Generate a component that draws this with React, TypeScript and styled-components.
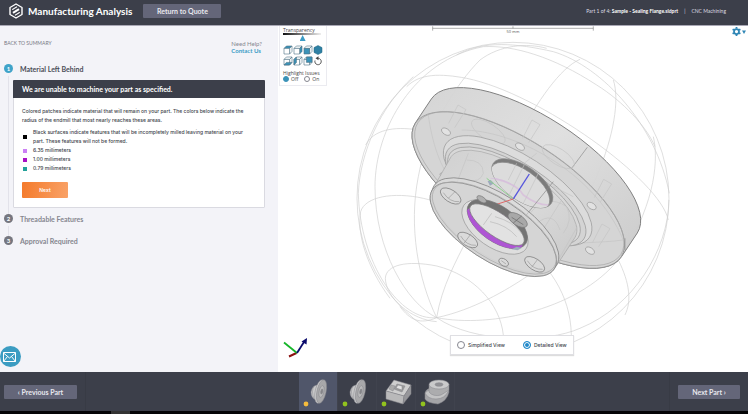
import React, { useState } from "react";
import styled, { createGlobalStyle } from "styled-components";

const GlobalStyle = createGlobalStyle`
  *, *::before, *::after { box-sizing: border-box; }
  body { margin: 0; background: #fff; font-family: Lato, "Open Sans", sans-serif; color: #3c3f4a; }
  button, input { font-family: inherit; margin: 0; }
  h1, h2, h3, p, ul, ol { margin: 0; padding: 0; }
  ul, ol { list-style: none; }
  a { text-decoration: none; }
`;

const Page = styled.div`
  display: flex;
  flex-direction: column;
  min-height: 100vh;
  padding-right: 3px;
`;

const Header = styled.header`
  display: flex;
  align-items: center;
  height: 26px;
  padding: 0 22px 3px 9px;
  background: #3c3f4a;
  border-bottom: 1px solid #a9a8b5;
  color: #fff;
`;

const Title = styled.h1`
  margin: 0 11px 0 5px;
  font-size: 10px;
  line-height: 14px;
  font-weight: 700;
  white-space: nowrap;
`;

const BarButton = styled.button<{ $width: number }>`
  width: ${(p) => p.$width}px;
  height: 14px;
  padding: 0;
  border: 0;
  border-radius: 1px;
  background: #646679;
  color: #e8e8ee;
  font-size: 7px;
  line-height: 14px;
  font-weight: 700;
  white-space: nowrap;
`;

const PartInfo = styled.div`
  display: flex;
  gap: 6px;
  margin-left: auto;
  font-size: 5px;
  line-height: 8px;
  color: #dcdce2;
  white-space: nowrap;
  b { color: #fff; }
`;

const Main = styled.main`
  flex: 1;
  display: grid;
  grid-template-columns: minmax(240px, 278fr) 470fr;
`;

const Side = styled.section`
  display: flex;
  flex-direction: column;
  background: #f3f3f8;
`;

const SideTop = styled.div`
  display: flex;
  justify-content: space-between;
  padding: 14px 16px 0 4px;
  font-size: 6px;
  line-height: 7px;
`;

const BackLink = styled.a`
  font-size: 5px;
  color: #777984;
`;

const Help = styled.div`
  color: #858791;
  a { display: block; color: #3b9cc6; font-weight: 700; }
`;

const Steps = styled.ol`
  padding: 10px 13px 0 4px;
`;

const Step = styled.li`
  display: grid;
  grid-template-columns: 9px 1fr;
  column-gap: 7px;
  row-gap: 6px;
  padding-bottom: 12px;
  background: linear-gradient(#e2e2ea, #e2e2ea) 4px 12px / 1px 100% no-repeat;
  &:last-child { background: none; }
  &:first-child { padding-bottom: 6px; }
`;

const StepNumber = styled.span<{ $active?: boolean }>`
  display: flex;
  align-items: center;
  justify-content: center;
  width: 9px;
  height: 9px;
  border-radius: 5px;
  background: ${(p) => (p.$active ? "#3fa3c9" : "#75767f")};
  color: #fff;
  font-size: 6px;
  line-height: 9px;
  font-weight: 700;
`;

const StepTitle = styled.h2<{ $active?: boolean }>`
  font-size: 7px;
  line-height: 10px;
  font-weight: 700;
  color: ${(p) => (p.$active ? "#4a4c57" : "#85868f")};
`;

const Card = styled.article`
  grid-column: 1 / -1;
  margin-left: 9px;
  background: #fff;
  border: 1px solid #dadae1;
  border-radius: 1px;
`;

const CardTitle = styled.h3`
  margin: -1px -1px 0;
  padding: 0 9px;
  border-radius: 1px 1px 0 0;
  background: #3c3f4a;
  color: #fff;
  font-size: 7px;
  line-height: 18px;
  font-weight: 700;
`;

const CardBody = styled.div`
  padding: 9px 12px 9px 8px;
  font-family: Inter, Lato, sans-serif;
  font-size: 5px;
  font-weight: 500;
  line-height: 9px;
`;

const Legend = styled.ul`
  padding: 3px 0 9px 1px;
`;

const LegendItem = styled.li`
  display: flex;
  align-items: center;
  gap: 6px;
`;

const Swatch = styled.span<{ $color: string }>`
  flex: none;
  width: 4px;
  height: 4px;
  background: ${(p) => p.$color};
`;

const NextButton = styled.button`
  display: block;
  width: 46px;
  height: 16px;
  padding: 0;
  border: 0;
  border-radius: 1px;
  background: linear-gradient(100deg, #f47a2b, #f9a267);
  color: #fff;
  font-size: 5px;
  font-weight: 600;
`;

const MailButton = styled.button`
  display: flex;
  align-items: center;
  justify-content: center;
  width: 21px;
  height: 21px;
  margin: auto 0 5px;
  padding: 0 2px 0 0;
  border: 0;
  border-radius: 11px;
  background: #3b9cc2;
`;

const Viewer = styled.section`
  display: grid;
  grid-template: minmax(0, 1fr) / minmax(0, 1fr);
  background: #fff;
  > * { grid-area: 1 / 1; }
`;

const Scene = styled.svg`
  display: block;
  width: 100%;
  height: 100%;
`;

const Tools = styled.div`
  place-self: start;
  width: 48px;
  margin-left: 1px;
  padding: 1px 3px 3px;
  border: 1px solid #ebebf0;
  border-top: 0;
  background: #fff;
  font: 5px/6px "Open Sans", sans-serif;
  color: #444;
`;

const SliderLabel = styled.label`
  display: block;
`;

const Slider = styled.input`
  display: block;
  appearance: none;
  width: 38px;
  height: 8px;
  background: linear-gradient(90deg, #111, #eee) 0 0 / 100% 2px no-repeat;
  &::-webkit-slider-thumb {
    appearance: none;
    width: 6px;
    height: 6px;
    margin-top: 2px;
    background: #3b9cc6;
    clip-path: polygon(50% 0, 100% 100%, 0 100%);
  }
`;

const ToolGrid = styled.div`
  display: grid;
  grid-template-columns: repeat(4, 10px);
  gap: 1px 0;
  padding: 4px 0 4px;
`;

const ToolButton = styled.button`
  width: 10px;
  height: 10px;
  padding: 0;
  border: 0;
  background: none;
  svg { display: block; }
`;

const Choices = styled.fieldset`
  display: flex;
  gap: 6px;
  margin: 0;
  padding: 0;
  border: 0;
  legend { padding: 0; white-space: nowrap; }
`;

const Choice = styled.label<{ $gap: number }>`
  display: flex;
  align-items: center;
  gap: ${(p) => p.$gap}px;
  white-space: nowrap;
`;

const Radio = styled.input<{ $size: number; $color: string }>`
  appearance: none;
  width: ${(p) => p.$size}px;
  height: ${(p) => p.$size}px;
  border: 1px solid #85868f;
  border-radius: 50%;
  background: #fff;
  &:checked {
    border-color: ${(p) => p.$color};
    background: ${(p) => p.$color};
    box-shadow: inset 0 0 0 1px ${(p) => (p.$size > 6 ? "#fff" : p.$color)};
  }
`;

const ViewBox = styled.div`
  place-self: end start;
  display: flex;
  align-items: center;
  gap: 18px;
  height: 20px;
  margin: 0 0 17px 172px;
  padding: 0 6px;
  border: 1px solid #dfdfe3;
  background: #fff;
  box-shadow: 0 1px 1px #ddd;
  font-family: Inter, Lato, sans-serif;
  font-size: 5px;
  font-weight: 500;
`;

const Settings = styled.button`
  place-self: start end;
  display: flex;
  align-items: center;
  gap: 1px;
  margin: 1px 2px 0 0;
  padding: 0;
  border: 0;
  background: none;
`;

const AxisMark = styled.svg`
  place-self: end start;
  margin: 0 0 14px 4px;
`;

const Footer = styled.footer`
  display: grid;
  grid-template-columns: 86px 1fr 79px;
  height: 39px;
  background: #3c3f4a;
`;

const FooterSide = styled.div<{ $end?: boolean }>`
  display: flex;
  align-items: center;
  padding: 0 8px 0 ${(p) => (p.$end ? 8 : 4)}px;
  border-${(p) => (p.$end ? "left" : "right")}: 1px solid #383b45;
`;

const Thumbs = styled.nav`
  display: flex;
  justify-content: center;
  padding-right: 2px;
`;

const Thumb = styled.button<{ $active: boolean }>`
  width: 39px;
  height: 39px;
  padding: 0;
  border: 0;
  border-right: 1px solid #40434e;
  background: ${(p) => (p.$active ? "#50566a" : "transparent")};
  svg { display: block; }
`;

const Strip = styled.div`
  height: 3px;
  background: linear-gradient(#333, #333) 111px 0 / 19px 3px no-repeat #040406;
`;

const cubeFaces = [
  { top: true },
  { side: true },
  { front: true },
  { solid: true },
  { bottom: true },
  { left: true },
  { back: true },
];

function Cube({ top, side, front, bottom, left, back, solid }: any) {
  const blue = "#3b93b8";
  if (solid)
    return (
      <svg width="10" height="10" viewBox="0 0 10 10" aria-hidden="true">
        <path d="M5 .5 9 2.6V7.4L5 9.6 1 7.4V2.6Z" fill="#2f81a5" stroke="#23647f" strokeWidth=".5" />
      </svg>
    );
  return (
    <svg width="10" height="10" viewBox="0 0 10 10" aria-hidden="true">
      <g stroke="#4b7183" strokeWidth=".6" strokeLinejoin="round" fill="#fff">
        <path d="M1 3.4 3.4 1H9L6.6 3.4Z" fill={top ? blue : "#fff"} />
        <path d="M6.6 3.4 9 1V6.4L6.6 9Z" fill={side ? blue : "#fff"} />
        <path d="M1 3.4H6.6V9H1Z" fill={front ? blue : "#fff"} />
        {back && <path d="M3.4 1H9V6.4H3.4Z" fill={blue} />}
        {bottom && <path d="M1 9 3.4 6.4H9L6.6 9Z" fill={blue} />}
        {left && <path d="M1 3.4 3.4 1V6.4L1 9Z" fill={blue} />}
      </g>
    </svg>
  );
}

function Logo() {
  return (
    <svg width="14" height="16" viewBox="0 0 28 32" fill="none" stroke="#fff" aria-hidden="true">
      <path d="M14 2 26 9V23L14 30 2 23V9Z" strokeWidth="2.8" strokeLinejoin="round" />
      <path d="M7.500 14V12.500L16 7.500M7.500 19 19.500 11.500M8.500 20.500 20.500 13M12 24.500 20.500 19.500V18" strokeWidth="2.200" />
    </svg>
  );
}

const wires = [
  "M290 905C215 900 138 835 136 775C138 735 200 720 290 738C400 765 480 850 490 945",
  "M150 835C80 740 50 640 62 575C75 530 160 515 250 535C420 575 690 700 694 945",
  "M77 375C100 330 160 318 235 330C420 350 780 560 835 720C870 790 875 845 855 885",
  "M200 200C240 160 300 160 380 175C600 220 960 480 985 600",
  "M350 105C430 60 530 70 640 95C790 140 950 320 988 520",
  "M290 893C200 850 105 690 105 500C105 330 220 120 430 80C520 75 640 110 770 195C850 245 920 320 945 380",
  "M290 893C235 780 205 620 235 470C260 330 350 190 420 120C480 75 560 68 620 85",
  "M290 893C305 800 350 720 380 660C450 520 600 170 720 118",
  "M290 893C400 870 500 810 560 770C740 620 860 300 820 180",
  "M290 893C450 925 730 870 850 700C950 540 955 410 940 350",
  "M290 893C400 970 620 970 720 925C880 860 985 690 987 540",
  "M290 893C180 905 60 730 55 520C60 400 120 260 220 170",
  "M290 893C240 915 210 900 180 860",
];

const pins: [number, number][] = [[318, 335], [540, 380], [755, 558], [750, 692]];

function Hole({ x, y, a = 32, b = 17, fill = "#dadada" }: any) {
  return <ellipse cx={x} cy={y} rx={a} ry={b} transform={`rotate(33 ${x} ${y})`} fill={fill} />;
}

function FlangeScene() {
  return (
    <Scene viewBox="0 0 470 346" role="img" aria-label="Sealing flange model">
      <defs>
        <linearGradient id="rim" x1="0" y1="0" x2="1" y2="1">
          <stop offset="0" stopColor="#d2d2d2" />
          <stop offset=".45" stopColor="#dedede" />
          <stop offset="1" stopColor="#c8c8c8" />
        </linearGradient>
        <linearGradient id="barrel" x1="0" y1="0" x2="1" y2="1">
          <stop offset="0" stopColor="#d0d0d0" />
          <stop offset=".5" stopColor="#dcdcdc" />
          <stop offset="1" stopColor="#c8c8c8" />
        </linearGradient>
        <clipPath id="bore">
          <ellipse cx="472" cy="612" rx="104" ry="53" transform="rotate(35 472 612)" />
        </clipPath>
        <clipPath id="upper">
          <ellipse cx="547" cy="490" rx="106" ry="51" transform="rotate(35 547 490)" />
        </clipPath>
      </defs>
      <g transform="translate(62 -6) scale(.3333)" fill="none">
        <g stroke="#888" strokeWidth="2">
          <path d="M278 25H760M278 19V32M760 19V32M519 19V25" />
        </g>
        <text x="519" y="38" fontSize="12" textAnchor="middle" fill="#555" fontFamily="Open Sans">50 mm</text>
        <g stroke="#cfcfcf" strokeWidth="2">
          <circle cx="519" cy="535" r="468" />
          {wires.map((d) => <path key={d} d={d} />)}
        </g>
        <path d="M226 309 274 237A368 146 33 0 1 892 639L844 711A368 146 33 0 1 226 309Z" fill="url(#rim)" fillOpacity=".95" stroke="#808080" strokeWidth="3" />
        <g stroke="#8a8a8a" strokeWidth="2">
          <ellipse cx="535" cy="510" rx="368" ry="146" transform="rotate(33 535 510)" fill="#d5d5d5" />
          <ellipse cx="538" cy="506" rx="363" ry="142" transform="rotate(33 538 506)" stroke="#a8a8a8" />
          <path d="M742 382 695 445M855 655V690" />
        </g>
        <g stroke="#c4c4c4" strokeWidth="2">
          {pins.map(([x, y]) => (
            <path key={x} d={`M${x + 8} ${y - 25}L${x + 36} ${y - 80}L${x + 60} ${y - 66}L${x + 26} ${y - 12}`} />
          ))}
          <ellipse cx="445" cy="335" rx="58" ry="24" transform="rotate(33 445 335)" />
          <ellipse cx="655" cy="410" rx="55" ry="24" transform="rotate(33 655 410)" />
          <path d="M265 285C275 360 300 450 345 490M365 330C520 330 760 450 850 660M630 680C700 665 780 670 850 660" />
        </g>
        <g stroke="#989898" strokeWidth="2">
          {pins.map(([x, y]) => <Hole key={x} x={x} y={y} a={15} b={9} fill="#e2e2e2" />)}
          <path d="M311 458Q298 458 300 465Q304 472 312 470" />
          <ellipse cx="533" cy="512" rx="257" ry="104" transform="rotate(33 533 512)" fill="#dcdcdc" />
          <ellipse cx="527" cy="524" rx="244" ry="94" transform="rotate(33 527 524)" fill="#d4d4d4" />
          <ellipse cx="522" cy="527" rx="230" ry="90" transform="rotate(33 522 527)" fill="#d8d8d8" />
        </g>
        <path d="M334 409A222 88 33 0 1 706 651L643 747A218 92 33 0 1 277 509Z" fill="url(#barrel)" stroke="#a6a6a6" strokeWidth="2" />
        <g stroke="#c4c4c4" strokeWidth="2">
          <path d="M385 400 350 490M665 540 590 660M712 620 655 720M590 400 540 440M640 500 700 530" />
          <path d="M570 580Q620 520 680 560Q700 600 670 640M590 610Q640 570 660 630M380 420Q430 420 430 460Q420 490 380 480" />
        </g>
        <g stroke="#888" strokeWidth="2">
          <ellipse cx="547" cy="490" rx="106" ry="51" transform="rotate(35 547 490)" fill="#7c7c7c" />
          <g clipPath="url(#upper)">
            <ellipse cx="540" cy="499" rx="103" ry="51" transform="rotate(35 540 499)" fill="#dcdcdc" />
            <path d="M530 430 505 480M555 430 505 530M600 450 545 560" stroke="#c4c4c4" />
            <path d="M460 475Q530 490 550 525Q590 555 625 555" stroke="#d5b2db" strokeWidth="5" opacity=".6" />
          </g>
          <path d="M452 475Q490 475 525 500M455 484Q470 510 515 535" stroke="#d5bedd" />
          <path d="M443 484 452 480 462 490 450 497Z" fill="#9caabd" stroke="none" />
        </g>
        <path d="M520 537 440 475" stroke="#8ed08e" strokeWidth="3" />
        <path d="M520 537 568 462" stroke="#5555dd" strokeWidth="4" />
        <path d="M640 485 555 590" stroke="#888" strokeWidth="2" />
        <g stroke="#7c7c7c" strokeWidth="2">
          <ellipse cx="466" cy="616" rx="219" ry="93" transform="rotate(33 466 616)" fill="#dddddd" fillOpacity=".55" />
          <ellipse cx="460" cy="628" rx="218" ry="92" transform="rotate(33 460 628)" fill="#d4d4d4" fillOpacity=".94" />
          <ellipse cx="463" cy="624" rx="214" ry="89" transform="rotate(33 463 624)" stroke="#aaa" />
        </g>
        <path d="M520 537 470 553" stroke="#d66" strokeWidth="3" />
        <g stroke="#777" strokeWidth="2">
          <ellipse cx="465" cy="621" rx="114" ry="60" transform="rotate(35 465 621)" fill="#dedede" stroke="#999" />
          <ellipse cx="472" cy="612" rx="104" ry="53" transform="rotate(35 472 612)" fill="#747474" />
          <g clipPath="url(#bore)">
            <ellipse cx="462" cy="628" rx="100" ry="52" transform="rotate(35 462 628)" fill="#ae55d4" />
            <ellipse cx="471" cy="614" rx="97" ry="35" transform="rotate(35 471 614)" fill="#e2e2e2" />
            <path d="M455 580 430 615M465 590Q520 605 545 640M450 605Q500 615 530 650" stroke="#b8b8b8" />
          </g>
          <path d="M515 688 530 680 545 684 533 691Z" fill="#9daeb9" stroke="none" />
        </g>
        <g stroke="#777" strokeWidth="2">
          <Hole x={332} y={528} a={35} b={18} />
          <Hole x={383} y={660} a={34} b={17} />
          <Hole x={584} y={733} a={34} b={17} />
          <Hole x={533} y={600} a={33} b={16} fill="#a8a8a8" />
          <Hole x={425} y={538} a={16} b={8} fill="#b0b0b0" />
          <Hole x={491} y={727} a={16} b={10} />
          <path d="M310 518Q330 548 358 545M362 648Q380 678 408 676M562 722Q580 750 608 748M345 515 325 535M392 643 372 670M594 717 575 742M484 722 498 732" stroke="#999" />
          <path d="M515 592 550 614M545 588 520 609" stroke="#666" />
        </g>
      </g>
    </Scene>
  );
}

function PartIcon({ kind, dot }: { kind: string; dot: string }) {
  return (
    <svg width="38" height="39" viewBox="0 0 38 39" aria-hidden="true">
      <g stroke="#85858a" strokeWidth=".5" fill="#b9b9ba">
        {kind === "disc" && (
          <>
            <path d="M18 13Q13 14 12 20Q12 26 17 28L22 27V12Z" fill="#c9c9ca" />
            <path d="M15 14Q12 19 15 27" fill="none" />
            <ellipse cx="21" cy="19.500" rx="4.800" ry="12" transform="rotate(12 21 19.500)" fill="#cfcfd0" />
            <ellipse cx="22.500" cy="19.500" rx="4.600" ry="12" transform="rotate(12 22.500 19.500)" fill="#a8a8aa" />
            <ellipse cx="22.500" cy="19.500" rx="2.400" ry="6" transform="rotate(12 22.500 19.500)" fill="#b9b9ba" />
            <ellipse cx="22.800" cy="19.500" rx="1" ry="2.500" transform="rotate(12 22.800 19.500)" fill="#858588" />
          </>
        )}
        {kind === "block" && (
          <>
            <path d="M9 19 17 8 34 13 27 24Z" fill="#cecece" />
            <path d="M9 19 27 24 26 32 9 27Z" />
            <path d="M27 24 34 13V22L26 32Z" fill="#96969a" />
            <path d="M17 17 20 12 28 14 25 20Z" fill="#999" />
            <path d="M19 16 21 13 25 14V18Z" fill="#e2e2e2" />
            <path d="M12 17 14 13 18 14 16 19Z" fill="#aaa" />
          </>
        )}
        {kind === "round" && (
          <>
            <path d="M9 21Q10 15 22 16Q33 14 33 20Q31 29 22 32Q11 31 9 27Z" fill="#a5a5a8" />
            <path d="M9 21Q14 16 22 17Q31 15 33 18Q29 27 20 27Q12 27 9 21Z" fill="#c3c3c4" />
            <path d="M13 13V20Q17 25 25 23L33 18V12Z" fill="#acacae" />
            <ellipse cx="23" cy="12.500" rx="10" ry="4.500" fill="#cacacb" />
            <ellipse cx="23" cy="12.500" rx="4" ry="1.800" fill="#929296" />
          </>
        )}
      </g>
      <circle cx="7" cy="32" r="2.400" fill={dot} />
    </svg>
  );
}

const legend = [
  { color: "#000", text: "Black surfaces indicate features that will be incompletely milled leaving material on your part. These features will not be formed." },
  { color: "#cb80f5", text: "6.35 millimeters" },
  { color: "#a911c6", text: "1.00 millimeters" },
  { color: "#22a199", text: "0.79 millimeters" },
];

const parts = [
  { kind: "disc", dot: "#f6bc3c", name: "Part 1" },
  { kind: "disc", dot: "#92c31e", name: "Part 2" },
  { kind: "block", dot: "#92c31e", name: "Part 3" },
  { kind: "round", dot: "#92c31e", name: "Part 4" },
];

export default function App() {
  const [view, setView] = useState("Detailed View");
  const [issues, setIssues] = useState("Off");
  const [part, setPart] = useState(0);

  return (
    <>
      <GlobalStyle />
      <Page>
        <Header>
          <Logo />
          <Title>Manufacturing Analysis</Title>
          <BarButton $width={78}>Return to Quote</BarButton>
          <PartInfo>
            <span>Part 1 of 4: <b>Sample - Sealing Flange.sldprt</b></span>
            <span>|</span>
            <span>CNC Machining</span>
          </PartInfo>
        </Header>
        <Main>
          <Side>
            <SideTop>
              <BackLink href="#summary">BACK TO SUMMARY</BackLink>
              <Help>Need Help?<a href="#contact">Contact Us</a></Help>
            </SideTop>
            <Steps>
              <Step>
                <StepNumber $active>1</StepNumber>
                <StepTitle $active>Material Left Behind</StepTitle>
                <Card>
                  <CardTitle>We are unable to machine your part as specified.</CardTitle>
                  <CardBody>
                    <p>Colored patches indicate material that will remain on your part. The colors below indicate the radius of the endmill that most nearly reaches these areas.</p>
                    <Legend>
                      {legend.map((l) => (
                        <LegendItem key={l.color}><Swatch $color={l.color} />{l.text}</LegendItem>
                      ))}
                    </Legend>
                    <NextButton>Next</NextButton>
                  </CardBody>
                </Card>
              </Step>
              <Step>
                <StepNumber>2</StepNumber>
                <StepTitle>Threadable Features</StepTitle>
              </Step>
              <Step>
                <StepNumber>3</StepNumber>
                <StepTitle>Approval Required</StepTitle>
              </Step>
            </Steps>
            <MailButton aria-label="Send a message">
              <svg width="13" height="10" viewBox="0 0 13 10" fill="none" stroke="#fff" aria-hidden="true">
                <path d="M.5.5H12.500V9.500H.5ZM.5 1 6.500 6 12.500 1M.5 9.500 4.500 4.500M12.500 9.500 8.500 4.500" />
              </svg>
            </MailButton>
          </Side>
          <Viewer>
            <FlangeScene />
            <Tools>
              <SliderLabel htmlFor="transparency">Transparency</SliderLabel>
              <Slider id="transparency" type="range" min="0" max="100" defaultValue="52" />
              <ToolGrid>
                {cubeFaces.map((f, i) => (
                  <ToolButton key={i} aria-label={`View ${i + 1}`}><Cube {...f} /></ToolButton>
                ))}
                <ToolButton aria-label="Reset view">
                  <svg width="10" height="10" viewBox="0 0 10 10" fill="none" stroke="#444" aria-hidden="true">
                    <path d="M2 4.500A3.200 3.200 0 1 0 5.200 2.300" strokeWidth=".9" />
                    <path d="M2.500 2.300 5.500 .3V4.300Z" fill="#444" stroke="none" />
                  </svg>
                </ToolButton>
              </ToolGrid>
              <Choices>
                <legend>Highlight Issues</legend>
                {["Off", "On"].map((o) => (
                  <Choice key={o} $gap={2}>
                    <Radio $size={6} $color="#3b93b8" type="radio" name="issues" checked={issues === o} onChange={() => setIssues(o)} />
                    {o}
                  </Choice>
                ))}
              </Choices>
            </Tools>
            <Settings aria-label="Settings">
              <svg width="9" height="9" viewBox="0 0 18 18" fill="none" stroke="#2f86b5" aria-hidden="true">
                <circle cx="9" cy="9" r="5" strokeWidth="3.500" />
                <path d="M9 0V3M9 15V18M1.200 4.500 3.800 6M14.200 12 16.800 13.500M1.200 13.500 3.800 12M14.200 6 16.800 4.500" strokeWidth="3.500" />
              </svg>
              <svg width="4" height="4" viewBox="0 0 4 4" aria-hidden="true"><path d="M0 .5H4L2 4Z" fill="#2f86b5" /></svg>
            </Settings>
            <AxisMark width="28" height="22" viewBox="0 0 28 22" fill="none" aria-hidden="true">
              <path d="M14.500 17 7 20.500" stroke="#8b1010" strokeWidth="2" />
              <path d="M2 6.500 15 17" stroke="#16b52a" strokeWidth="1.800" />
              <path d="M15 17 22 6" stroke="#0b0b6d" strokeWidth="1.800" />
              <path d="M25 2 24.500 8.500 19.500 5.500Z" fill="#0b0b6d" />
            </AxisMark>
            <ViewBox>
              {["Simplified View", "Detailed View"].map((o) => (
                <Choice key={o} $gap={3}>
                  <Radio $size={8} $color="#2189ca" type="radio" name="view" checked={view === o} onChange={() => setView(o)} />
                  {o}
                </Choice>
              ))}
            </ViewBox>
          </Viewer>
        </Main>
        <Footer>
          <FooterSide><BarButton $width={74}>‹ Previous Part</BarButton></FooterSide>
          <Thumbs aria-label="Parts">
            {parts.map((p, i) => (
              <Thumb key={p.name} $active={part === i} aria-label={p.name} onClick={() => setPart(i)}>
                <PartIcon kind={p.kind} dot={p.dot} />
              </Thumb>
            ))}
          </Thumbs>
          <FooterSide $end><BarButton $width={63}>Next Part ›</BarButton></FooterSide>
        </Footer>
        <Strip />
      </Page>
    </>
  );
}
